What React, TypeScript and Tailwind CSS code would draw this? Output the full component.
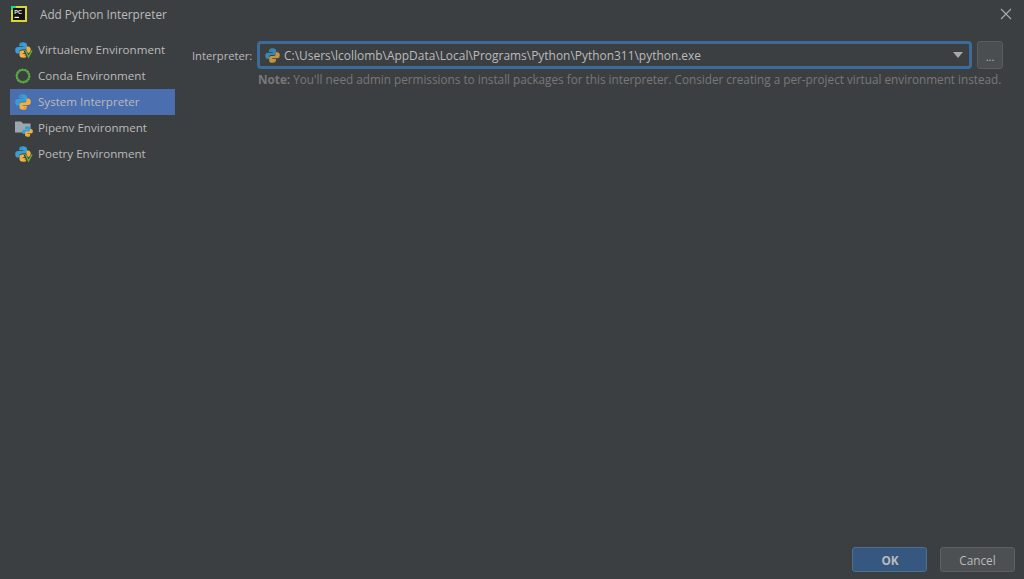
import React from "react";

function Py({ size = 16 }: { size?: number }) {
  return (
    <svg width={size} height={size} viewBox="0 0 16 16" className="shrink-0">
      <path d="M8 .2C5 .2 4.300 1.300 4.300 2.600V4.300H8.200V5H2.900C1.300 5 .2 6.100 .2 8.200s1.100 3.400 2.600 3.400h1.600V9.800c0-1.300 1-2.300 2.300-2.300h3.300c1.100 0 2-.9 2-2V2.800C12 1.200 10.400 .2 8 .2z" fill="#389fd6" />
      <circle cx="6.100" cy="2.300" r=".7" fill="#2f7fb0" />
      <path d="M8 15.800c3 0 3.700-1.100 3.700-2.400v-1.700H7.800V11h5.300c1.600 0 2.700-1.100 2.700-3.200s-1.100-3.400-2.600-3.400h-1.600v1.800c0 1.300-1 2.300-2.300 2.300H6.500c-1.100 0-2 .9-2 2v2.700c0 1.600 1.100 2.500 3.500 2.500z" fill="#f4af3d" />
      <circle cx="9.900" cy="13.700" r=".7" fill="#c98f2e" />
    </svg>
  );
}

function PyV() {
  return (
    <span className="relative block w-4 h-4">
      <Py />
      <svg width="10" height="10" viewBox="0 0 10 10" className="absolute left-[9px] top-[7px]">
        <path d="M1 1.500 L4.500 9 L8.500 1.500" fill="none" stroke="#3c3f41" strokeWidth="3" />
        <path d="M1.500 1.500 L4.500 8 L8 1.500" fill="none" stroke="#62b543" strokeWidth="1.400" />
      </svg>
    </span>
  );
}

function Conda() {
  return (
    <svg width="16" height="16" viewBox="0 0 16 16">
      <circle cx="8" cy="8" r="6.200" fill="none" stroke="#4e9a3f" strokeWidth="2.200" />
      <circle cx="8" cy="8" r="6.700" fill="none" stroke="#6fb04f" strokeWidth="1.200" strokeDasharray="1.500 1.500" />
    </svg>
  );
}

function Pipenv() {
  return (
    <span className="relative block w-4 h-4">
      <svg width="16" height="16" viewBox="0 0 16 16">
        <path d="M0 1.500h6l2 2h7.500v9H0z" fill="#9aa7b0" />
      </svg>
      <span className="absolute left-[7px] top-[6px]">
        <Py size={11} />
      </span>
    </span>
  );
}

function Logo() {
  return (
    <svg width="16" height="16" viewBox="0 0 16 16">
      <rect x="0" y="0" width="16" height="16" fill="#d8d92a" />
      <path d="M0 0h5v4H0z" fill="#21d789" />
      <rect x="2" y="2" width="12" height="12" fill="#111" />
      <rect x="3.500" y="10.800" width="4.500" height="1.200" fill="#eee" />
      <text x="3.300" y="8" fontSize="5.500" fontWeight="700" fill="#eee" fontFamily="Liberation Sans, sans-serif">PC</text>
    </svg>
  );
}

const items: { label: string; icon: React.ReactNode; selected?: boolean }[] = [
  { label: "Virtualenv Environment", icon: <PyV /> },
  { label: "Conda Environment", icon: <Conda /> },
  { label: "System Interpreter", icon: <Py />, selected: true },
  { label: "Pipenv Environment", icon: <Pipenv /> },
  { label: "Poetry Environment", icon: <PyV /> },
];

export default function App() {
  return (
    <div className="w-[1024px] h-[579px] overflow-hidden bg-[#3c3f41] text-[#bbbbbb] flex flex-col text-[11.600px] font-['Open_Sans','Noto_Sans',sans-serif]">
      <div className="h-[30px] flex items-center pl-[11px] pr-[12px] shrink-0">
        <span className="block mt-[-3px]"><Logo /></span>
        <span className="ml-[13px] text-[11.750px] text-[#bbbbbb]">Add Python Interpreter</span>
        <svg width="12" height="12" viewBox="0 0 12 12" className="ml-auto mt-[-2px]">
          <path d="M1 1 L11 11 M11 1 L1 11" stroke="#a9adb0" strokeWidth="1.100" />
        </svg>
      </div>
      <div className="flex flex-1 min-h-0">
        <div className="w-[165px] ml-[10px] pt-[7px] shrink-0">
          {items.map((it) => (
            <div key={it.label} className={`h-[26px] flex items-center pl-[5px] gap-[7px] ${it.selected ? "bg-[#4b6eaf]" : ""}`}>
              <span className="w-4 h-4 block shrink-0">{it.icon}</span>
              <span className="leading-none whitespace-nowrap">{it.label}</span>
            </div>
          ))}
        </div>
        <div className="flex-1 pl-[17px] pr-[22px] pt-[11px]">
          <div className="flex items-center">
            <span className="w-[65px] shrink-0 text-[11.200px] pt-[3px]">Interpreter:</span>
            <div className="h-[28px] w-[715px] shrink-0 border-[3px] border-[#3d6b99] rounded-[4px] bg-[#3c3f41] flex items-center pl-[5px] pr-[6px]">
              <span className="block opacity-75 h-[15px]"><Py size={15} /></span>
              <span className="ml-[4px] text-[11.950px] pt-[2px] text-[#bbbbbb]">C:\Users\lcollomb\AppData\Local\Programs\Python\Python311\python.exe</span>
              <svg width="10" height="6" viewBox="0 0 10 6" className="ml-auto mt-[-1px]">
                <path d="M0 0h10L5 6z" fill="#a9a9a9" />
              </svg>
            </div>
            <div className="ml-[5px] w-[26px] h-[28px] rounded-[3px] border border-[#5a5d5f] bg-[#4a4e50] flex items-center justify-center text-[11px] leading-none pt-[3px]">...</div>
          </div>
          <div className="ml-[66px] mt-[2px] text-[11.740px] text-[#787878] leading-[16px] whitespace-nowrap">
            <span className="font-bold">Note:</span> You'll need admin permissions to install packages for this interpreter. Consider creating a per-project virtual environment instead.
          </div>
        </div>
      </div>
      <div className="h-[25px] mb-[7px] shrink-0 flex justify-end gap-[13px] pr-[9px] text-[11.800px]">
        <div className="w-[75px] h-[25px] rounded-[3px] border border-[#4c708c] bg-[#365880] flex items-center justify-center font-bold text-[#bbbbbb] pl-px pt-[2px]">OK</div>
        <div className="w-[75px] h-[25px] rounded-[3px] border border-[#5e6060] bg-[#4c5052] flex items-center justify-center text-[#bbbbbb] pt-[2px]">Cancel</div>
      </div>
    </div>
  );
}
